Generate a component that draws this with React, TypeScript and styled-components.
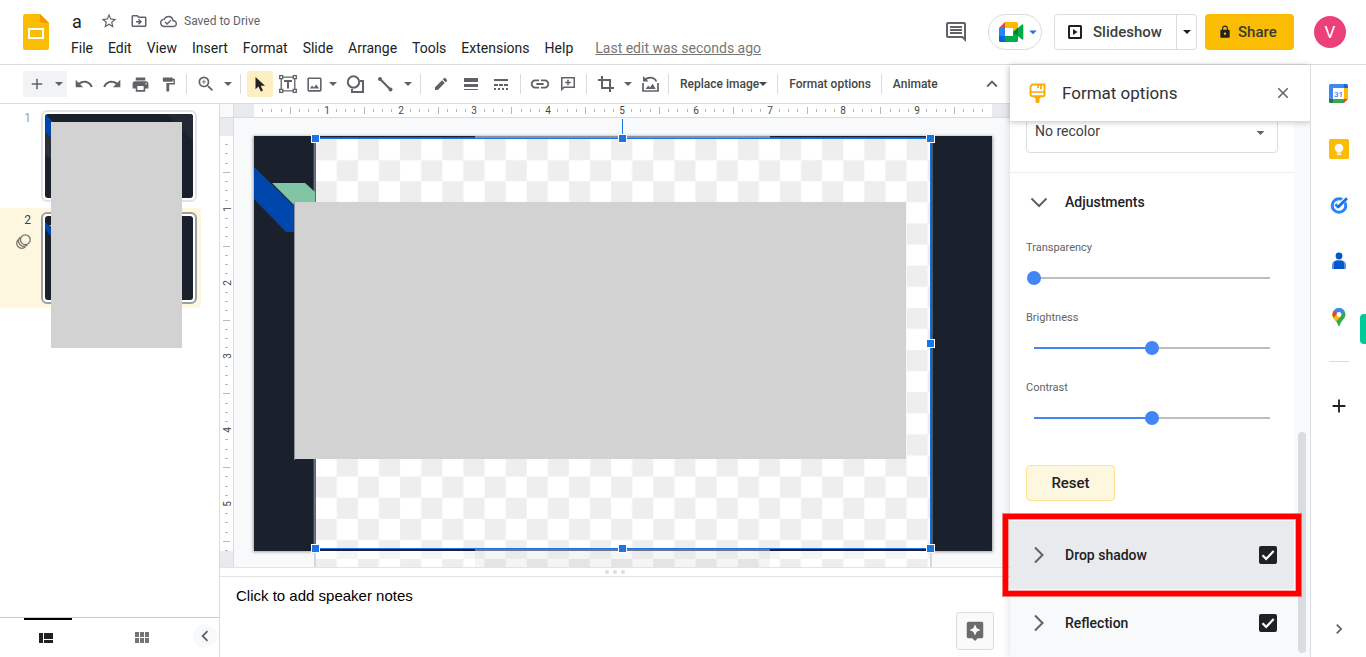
import React from "react";
import styled, { createGlobalStyle, css } from "styled-components";
import {
  MdAdd,
  MdArrowDropDown,
  MdAssistant,
  MdChevronLeft,
  MdChevronRight,
  MdClose,
  MdFormatPaint,
  MdInsertLink,
  MdKeyboardArrowUp,
  MdLock,
  MdOutlineCloudDone,
  MdOutlineDriveFileMove,
  MdOutlineImage,
  MdOutlineInsertComment,
  MdPrint,
  MdRedo,
  MdStarBorder,
  MdUndo,
  MdZoomIn,
} from "react-icons/md";

const c = {
  text: "#202124",
  icon: "#5f6368",
  line: "#dadce0",
  surface: "#f8f9fa",
  inactive: "#e8eaed",
  blue: "#1a73e8",
  slider: "#4285f4",
  yellow: "#fbbc04",
  ink: "#1b212c",
};

const GlobalStyle = createGlobalStyle`
  *, *::before, *::after { box-sizing: border-box; }
  body { margin: 0; background: #fff; color: ${c.text}; font-family: Roboto, "Liberation Sans", sans-serif; font-size: 14px; }
  button { font: inherit; color: inherit; border: 0; padding: 0; background: none; cursor: pointer; }
  svg { display: block; flex: none; }
  h1, h2, ol { margin: 0; padding: 0; font: inherit; }
`;

/* Page frame */

const Page = styled.div`
  display: flex;
  flex-direction: column;
  height: 100vh;
  overflow: hidden;
`;

const Body = styled.div`
  display: flex;
  flex: 1;
  min-height: 0;
`;

const Main = styled.main`
  display: flex;
  flex-direction: column;
  flex: 1;
  min-width: 0;
`;

const Workspace = styled.div`
  display: flex;
  flex: 1;
  min-height: 0;
`;

/* Header */

const Header = styled.header`
  display: flex;
  align-items: flex-start;
  height: 65px;
  padding: 0 20px 0 23px;
  border-bottom: 1px solid ${c.line};
`;

const LogoLink = styled.a`
  margin-top: 14px;
`;

const TitleBlock = styled.div`
  display: flex;
  flex-direction: column;
  flex: 1;
  margin-left: 15px;
  padding-top: 10px;
`;

const TitleRow = styled.div`
  display: flex;
  align-items: center;
  height: 22px;
  padding-left: 8px;
  color: ${c.icon};
`;

const DocTitle = styled.h1`
  width: 28px;
  font-size: 18px;
  color: ${c.text};
`;

const TitleButton = styled.button`
  width: 30px;
`;

const SaveState = styled.span`
  display: flex;
  align-items: center;
  gap: 7px;
  font-size: 12px;
`;

const MenuBar = styled.nav`
  display: flex;
  align-items: center;
  gap: 1px;
  height: 32px;
`;

const MenuButton = styled.button`
  padding: 0 7px;
  font-size: 14px;
  line-height: 20px;
  white-space: nowrap;
`;

const LastEdit = styled.a`
  margin-left: 14px;
  color: #777;
  font-size: 14px;
  line-height: 20px;
  white-space: nowrap;
`;

const HeaderActions = styled.div`
  display: flex;
  align-items: center;
  height: 64px;
`;

const CommentButton = styled.button`
  margin-right: 20px;
  color: ${c.icon};
`;

const MeetButton = styled.button`
  display: flex;
  align-items: center;
  width: 54px;
  height: 36px;
  margin-right: 12px;
  padding-left: 10px;
  border: 1px solid ${c.line};
  border-radius: 18px;
  color: ${c.blue};
`;

const SplitButton = styled.div`
  display: flex;
  height: 36px;
  margin-right: 8px;
  border: 1px solid ${c.line};
  border-radius: 4px;
`;

const SlideshowButton = styled.button`
  display: flex;
  align-items: center;
  gap: 11px;
  width: 121px;
  padding-left: 13px;
  font-size: 15px;
  font-weight: 500;
  color: #3c4043;
  svg { color: ${c.text}; }
`;

const SplitArrow = styled.button`
  display: flex;
  align-items: center;
  justify-content: center;
  width: 20px;
  border-left: 1px solid ${c.line};
`;

const ShareButton = styled.button`
  display: flex;
  align-items: center;
  gap: 6px;
  width: 89px;
  height: 36px;
  margin-right: 20px;
  padding-left: 13px;
  border-radius: 4px;
  background: ${c.yellow};
  font-size: 15px;
  font-weight: 500;
  color: #3c3a2e;
  svg { color: ${c.text}; }
`;

const Avatar = styled.button`
  width: 32px;
  height: 32px;
  border-radius: 50%;
  background: #ec407a;
  color: #fff;
  font-size: 17px;
`;

/* Toolbar */

const Toolbar = styled.div`
  display: flex;
  align-items: center;
  flex: none;
  height: 39px;
  padding: 0 7px 0 23px;
  border-bottom: 1px solid ${c.line};
  color: ${c.icon};
`;

const ToolButton = styled.button<{ $w?: number; $active?: boolean }>`
  display: flex;
  align-items: center;
  justify-content: center;
  width: ${(p) => p.$w ?? 28}px;
  height: 26px;
  border-radius: 2px;
  ${(p) =>
    p.$active &&
    css`
      width: 26px;
      margin: 0 1px;
      background: #feefc3;
      color: ${c.text};
    `}
`;

const NewSlide = styled.div`
  display: flex;
  margin-right: 3px;
  border-radius: 2px;
  background: #f1f3f4;
`;

const ToolText = styled.button`
  display: flex;
  align-items: center;
  height: 26px;
  padding: 0 6px;
  font-size: 12px;
  font-weight: 500;
  color: #444746;
  white-space: nowrap;
`;

const ToolDivider = styled.span`
  width: 1px;
  height: 20px;
  margin: 0 5px 0 4px;
  background: ${c.line};
`;

const ToolSpacer = styled.span`
  flex: 1;
`;

/* Filmstrip */

const Filmstrip = styled.aside`
  position: relative;
  display: flex;
  flex-direction: column;
  flex: none;
  width: 220px;
  border-right: 1px solid ${c.line};
`;

const SlideList = styled.ol`
  display: flex;
  flex-direction: column;
  flex: 1;
  gap: 2px;
  padding-top: 2px;
  list-style: none;
`;

const SlideItem = styled.li<{ $active?: boolean }>`
  display: flex;
  justify-content: space-between;
  width: 201px;
  height: 100px;
  padding: 4px;
  border-radius: 0 4px 4px 0;
  background: ${(p) => (p.$active ? "#fef7e0" : "transparent")};
  color: ${(p) => (p.$active ? "#3c4043" : "#9aa0a6")};
`;

const SlideMeta = styled.div`
  display: flex;
  flex-direction: column;
  align-items: flex-end;
  gap: 6px;
  width: 27px;
  font-size: 12px;
  line-height: 16px;
`;

const Thumb = styled.button<{ $active?: boolean }>`
  width: 156px;
  height: 92px;
  padding: 2px;
  border: 2px solid ${(p) => (p.$active ? "#9aa0a6" : "#e1e3e8")};
  border-radius: 6px;
  background: #fff;
  svg { border-radius: 3px; }
`;

const Redaction = styled.div`
  position: absolute;
  top: 18px;
  left: 51px;
  width: 131px;
  height: 226px;
  background: #d2d2d2;
`;

const ViewBar = styled.div`
  display: flex;
  flex: none;
  height: 40px;
  border-top: 1px solid #ccc;
  padding-left: 24px;
`;

const ViewButton = styled.button<{ $active?: boolean }>`
  display: flex;
  align-items: center;
  justify-content: center;
  width: 48px;
  margin-right: 48px;
  padding: 0 4px 2px 0;
  border-top: 2px solid ${(p) => (p.$active ? "#000" : "transparent")};
  color: ${(p) => (p.$active ? c.text : "#757575")};
`;

const CollapseButton = styled.button`
  display: flex;
  align-items: center;
  justify-content: center;
  width: 24px;
  height: 24px;
  margin: 6px 0 0 -23px;
  border-radius: 50%;
  background: ${c.surface};
  color: ${c.icon};
`;

/* Editor */

const Editor = styled.section`
  display: flex;
  flex-direction: column;
  flex: 1;
  min-width: 0;
`;

const RulerRow = styled.div`
  display: flex;
  flex: none;
  height: 14px;
  border-bottom: 1px solid ${c.line};
`;

const RulerCorner = styled.div`
  width: 14px;
  border-right: 1px solid ${c.line};
  background: ${c.surface};
`;

const RulerMargin = styled.div<{ $size?: number }>`
  flex: ${(p) => (p.$size ? `0 0 ${p.$size}px` : "1")};
  background: ${c.inactive};
`;

const TopTrack = styled.svg`
  flex: 1;
  min-width: 0;
  height: 13px;
`;

const SideTrack = styled.svg`
  width: 13px;
  height: 415px;
`;

const Stage = styled.div`
  display: flex;
  flex: 1;
  min-height: 0;
  overflow: hidden;
`;

const SideRuler = styled.div`
  display: flex;
  flex-direction: column;
  flex: none;
  width: 14px;
  border-right: 1px solid ${c.line};
`;

const Canvas = styled.div`
  flex: 1;
  min-width: 0;
  padding: 18px 18px 0 20px;
  background: ${c.surface};
`;

const SlideArt = styled.svg`
  width: 100%;
  overflow: visible;
`;

const Splitter = styled.div`
  display: flex;
  align-items: center;
  justify-content: center;
  gap: 4px;
  flex: none;
  height: 10px;
  border: solid #e3e3e3;
  border-width: 1px 0;
  i { width: 4px; height: 4px; border-radius: 50%; background: ${c.line}; }
`;

const Notes = styled.div`
  display: flex;
  justify-content: space-between;
  flex: none;
  height: 80px;
  padding: 0 16px;
  p { margin: 0; padding-top: 9px; font-family: "Liberation Sans", Arial, sans-serif; font-size: 15px; line-height: 20px; color: #000; }
`;

const ExploreButton = styled.button`
  display: flex;
  align-items: center;
  justify-content: center;
  width: 38px;
  height: 38px;
  margin-top: 35px;
  border: 1px solid ${c.line};
  border-radius: 3px;
  background: #fafafa;
  color: #6b6b6b;
`;

/* Format options */

const Panel = styled.aside`
  position: relative;
  display: flex;
  flex-direction: column;
  flex: none;
  width: 300px;
  background: ${c.surface};
  box-shadow: -2px 0 6px rgba(60, 64, 67, 0.12);
`;

const PanelHeader = styled.div`
  position: relative;
  z-index: 1;
  display: flex;
  align-items: center;
  flex: none;
  height: 57px;
  padding: 0 18px;
  background: #fff;
  border-bottom: 1px solid ${c.line};
  box-shadow: 0 1px 5px rgba(60, 64, 67, 0.25);
`;

const PanelTitle = styled.h2`
  flex: 1;
  margin-left: 14px;
  padding-bottom: 1px;
  font-size: 17px;
  color: #303236;
`;

const IconButton = styled.button`
  color: ${c.icon};
`;

const PanelScroll = styled.div`
  flex: 1;
  margin-top: -13px;
  padding-right: 16px;
`;

const Section = styled.section`
  padding: 0 16px 19px;
  background: #fff;
  & + & {
    padding-bottom: 20px;
    border-top: 1px solid #eceef0;
    border-radius: 0 0 6px 6px;
  }
`;

const SelectBox = styled.div`
  position: relative;
  svg { position: absolute; right: 8px; top: 14px; color: ${c.icon}; pointer-events: none; }
`;

const Select = styled.select`
  width: 100%;
  height: 44px;
  padding: 0 8px;
  border: 1px solid ${c.line};
  border-radius: 4px;
  background: #fff;
  appearance: none;
  font: 14px Roboto, sans-serif;
  color: #3c4043;
`;

const SectionToggle = styled.button`
  display: flex;
  align-items: center;
  gap: 16px;
  font-size: 14px;
  font-weight: 500;
  color: ${c.text};
  svg { color: ${c.icon}; }
`;

const AdjustToggle = styled(SectionToggle)`
  height: 58px;
  margin: 0 0 7px 3px;
`;

const Field = styled.label`
  display: flex;
  flex-direction: column;
  height: 70px;
  font-size: 11px;
  line-height: 20px;
  color: ${c.icon};
`;

const Slider = styled.input<{ $fill: number }>`
  width: 250px;
  height: 16px;
  margin: 12px 0 0 1px;
  appearance: none;
  background: linear-gradient(to right, ${c.slider} ${(p) => p.$fill}%, #bdbdbd ${(p) => p.$fill}%) center / calc(100% - 14px) 2px no-repeat;
  &::-webkit-slider-thumb { appearance: none; width: 14px; height: 14px; border-radius: 50%; background: ${c.slider}; }
`;

const ResetButton = styled.button`
  display: block;
  width: 89px;
  height: 36px;
  margin-top: 17px;
  border: 1px solid #fde293;
  border-radius: 4px;
  background: #fef7e0;
  font-size: 15px;
  font-weight: 500;
`;

const EffectRow = styled.div<{ $hover?: boolean }>`
  position: relative;
  display: flex;
  align-items: center;
  justify-content: space-between;
  height: 68px;
  padding: 0 17px 0 19px;
  background: ${(p) => (p.$hover ? c.inactive : "transparent")};
`;

const CheckBox = styled.input`
  appearance: none;
  width: 18px;
  height: 18px;
  margin: 0;
  border-radius: 2px;
  background: ${c.text} url("data:image/svg+xml,%3Csvg xmlns='http://www.w3.org/2000/svg' viewBox='0 0 18 18'%3E%3Cpath d='M3.5 9.3l3.6 3.6 7.6-7.8' fill='none' stroke='white' stroke-width='2.2'/%3E%3C/svg%3E") center / 18px;
`;

const Highlight = styled.div`
  position: absolute;
  z-index: 2;
  inset: -7px;
  border: 5px solid #f00;
  box-shadow: 0 0 0 1px rgba(255, 0, 0, 0.5), inset 0 0 0 1px rgba(255, 0, 0, 0.35);
  pointer-events: none;
`;

const ScrollThumb = styled.div`
  position: absolute;
  right: 4px;
  bottom: 4px;
  width: 8px;
  height: 221px;
  border-radius: 4px;
  background: ${c.line};
`;

/* App rail */

const Rail = styled.nav`
  position: relative;
  z-index: 1;
  display: flex;
  flex-direction: column;
  align-items: center;
  flex: none;
  width: 56px;
  padding-bottom: 18px;
  border-left: 1px solid ${c.line};
  background: #fff;
  hr { width: 20px; height: 1px; margin: 16px 0; border: 0; background: ${c.line}; }
`;

const RailLink = styled.a`
  display: flex;
  align-items: center;
  justify-content: center;
  width: 56px;
  height: 56px;
  color: ${c.text};
`;

const RailSpacer = styled.span`
  flex: 1;
`;

const RailTab = styled.div`
  position: absolute;
  top: 249px;
  right: 0;
  width: 6px;
  height: 30px;
  border-radius: 4px 0 0 4px;
  background: #00cb98;
`;

/* Icons */

const Caret = () => (
  <svg width="8" height="4" viewBox="0 0 8 4" fill="currentColor" aria-hidden>
    <path d="M0 0h8L4 4z" />
  </svg>
);

const SlidesLogo = () => (
  <svg width="26" height="36" viewBox="0 0 26 36">
    <path d="M2.500 0H17l9 9v24.500a2.500 2.500 0 0 1-2.500 2.500h-21A2.500 2.500 0 0 1 0 33.500v-31A2.500 2.500 0 0 1 2.500 0z" fill="#fbbc04" />
    <path d="M17 0l9 9h-6.500A2.500 2.500 0 0 1 17 6.500z" fill="#f29900" />
    <path d="M6 15h14v9H6z" fill="none" stroke="#fff" strokeWidth="2" />
  </svg>
);

const MeetLogo = () => (
  <svg width="25" height="20" viewBox="0 0 25 20">
    <path d="M0 6l6-6v6z" fill="#ea4335" />
    <path d="M0 6h6v8H0z" fill="#2684fc" />
    <path d="M0 14h6v6H1.500A1.500 1.500 0 0 1 0 18.500z" fill="#0066da" />
    <path d="M6 0h11.500A1.500 1.500 0 0 1 19 1.500V8l-5 3V6H6z" fill="#ffba00" />
    <path d="M6 14h8v-4l5 2v6.500a1.500 1.500 0 0 1-1.500 1.500H6z" fill="#00ac47" />
    <path d="M14 10l9-7.500a.800.800 0 0 1 1.300.600v13.800a.800.800 0 0 1-1.300.600z" fill="#00ac47" />
    <path d="M14 10l5-4.200v8.400z" fill="#00832d" />
  </svg>
);

const SlideshowIcon = () => (
  <svg width="14" height="14" viewBox="0 0 14 14">
    <rect x="1" y="1" width="12" height="12" rx=".5" fill="none" stroke="currentColor" strokeWidth="2" />
    <path d="M5 4l4.500 3L5 10z" fill="currentColor" />
  </svg>
);

const CursorIcon = () => (
  <svg width="12" height="16" viewBox="0 0 12 16" fill="currentColor">
    <path d="M1.500 1v12.300l3-2.700 2.300 5 2.200-1-2.300-4.800h4.300z" />
  </svg>
);

const TextBoxIcon = () => (
  <svg width="18" height="18" viewBox="0 0 18 18" fill="none" stroke="currentColor" strokeWidth="1.300">
    <path d="M4 2.200h10M4 15.800h10M2.200 4v10M15.800 4v10" />
    <path d="M.700.700h3v3h-3zM14.300.700h3v3h-3zM.700 14.300h3v3h-3zM14.300 14.300h3v3h-3z" />
    <path d="M5 6h8M9 6v7.500" strokeWidth="2" />
  </svg>
);

const ShapeIcon = () => (
  <svg width="18" height="18" viewBox="0 0 18 18" fill="none" stroke="currentColor" strokeWidth="2">
    <circle cx="7.500" cy="7" r="5.700" />
    <path d="M14 6h3v11H6v-3" />
  </svg>
);

const LineIcon = () => (
  <svg width="16" height="16" viewBox="0 0 16 16" fill="currentColor">
    <path d="M2.500 2.500l11 11" stroke="currentColor" strokeWidth="2.200" />
    <circle cx="3" cy="3" r="2" />
    <circle cx="13.500" cy="13.500" r="2" />
  </svg>
);

const PencilIcon = () => (
  <svg width="14" height="14" viewBox="0 0 14 14" fill="currentColor">
    <path d="M1 10.200V13h2.800l7-7L8 3.200zM8.800 2.400l2.800 2.800 1.300-1.300a.8.8 0 0 0 0-1.100L11.200 1.100a.8.8 0 0 0-1.100 0z" />
  </svg>
);

const WeightIcon = () => (
  <svg width="14" height="12" viewBox="0 0 14 12" fill="currentColor">
    <path d="M0 0h14v4H0zM0 6h14v3H0zM0 11h14v1H0z" />
  </svg>
);

const DashIcon = () => (
  <svg width="14" height="11" viewBox="0 0 14 11" fill="currentColor">
    <path d="M0 0h14v2H0zM0 5h4v2H0zM5 5h4v2H5zM10 5h4v2h-4zM0 9h2v2H0zM4 9h2v2H4zM8 9h2v2H8zM12 9h2v2h-2z" />
  </svg>
);

const AddCommentIcon = () => (
  <svg width="14" height="14" viewBox="0 0 14 14" fill="none" stroke="currentColor">
    <path d="M.750 12.500V.750h12.500v9.500H3z" strokeWidth="1.500" />
    <path d="M7 2.700v5.600M4.200 5.500h5.600" strokeWidth="1.500" />
  </svg>
);

const CropIcon = () => (
  <svg width="16" height="16" viewBox="0 0 16 16" fill="none" stroke="currentColor" strokeWidth="2">
    <path d="M0 4h12v12M4 0v12h12" />
  </svg>
);

const ResetImageIcon = () => (
  <svg width="17" height="16" viewBox="0 0 17 16" fill="none" stroke="currentColor" strokeWidth="1.700">
    <path d="M1 7v8h15V7" />
    <path d="M2.500 4.500C5 .800 12 .200 14.500 5.500" />
    <path d="M1 0v5.500h5.500z" fill="currentColor" stroke="none" />
    <path d="M3.500 13l2.700-3.500 1.800 2 2.700-3.700 3 5.200z" fill="currentColor" stroke="none" />
  </svg>
);

const BrushIcon = () => (
  <svg width="20" height="20" viewBox="0 0 20 20">
    <path d="M6 1.500h10.500v10a1.700 1.700 0 0 1-1.700 1.700H4.200a1.700 1.700 0 0 1-1.700-1.700v-7a3 3 0 0 1 3-3z" fill="#fff" stroke="#f9ab00" strokeWidth="1.900" />
    <path d="M2.500 9h14M13 1.500v5M10 1.500v3.500" fill="none" stroke="#f9ab00" strokeWidth="1.700" />
    <path d="M6.500 13h6v2h-1v3.500A1.500 1.500 0 0 1 10 20H9a1.500 1.500 0 0 1-1.500-1.500V15h-1z" fill="#f9ab00" />
  </svg>
);

const MotionIcon = () => (
  <svg width="16" height="16" viewBox="0 0 16 16" fill="none" stroke="#75736a" strokeWidth="1.300">
    <circle cx="10.300" cy="5.700" r="4.900" />
    <path d="M5 3.300a4.900 4.900 0 1 0 7.500 7.500" />
    <path d="M3.200 5.600a4.900 4.900 0 1 0 7.200 7.200" />
  </svg>
);

const FilmstripIcon = () => (
  <svg width="14" height="10" viewBox="0 0 14 10" fill="currentColor">
    <path d="M0 0h4v10H0zM5 0h9v6H5zM5 7h9v3H5z" />
  </svg>
);

const GridIcon = () => (
  <svg width="14" height="11" viewBox="0 0 14 11" fill="currentColor">
    <path d="M0 0h4v5H0zM5 0h4v5H5zM10 0h4v5h-4zM0 6h4v5H0zM5 6h4v5H5zM10 6h4v5h-4z" />
  </svg>
);

const Chevron = ({ down }: { down?: boolean }) => (
  <svg width="20" height="18" viewBox="0 0 20 18" fill="none" stroke="currentColor" strokeWidth="2">
    <path d={down ? "M2.500 5.500l7.500 7.500 7.500-7.500" : "M6 1.500l7.500 7.500L6 16.500"} />
  </svg>
);

const CalendarIcon = () => (
  <svg width="19" height="19" viewBox="0 0 19 19">
    <path d="M1.500 0H15v4H4v11H0V1.500A1.500 1.500 0 0 1 1.500 0z" fill="#4285f4" />
    <path d="M15 0h2.500A1.500 1.500 0 0 1 19 1.500V4h-4z" fill="#1967d2" />
    <path d="M15 4h4v11h-4z" fill="#fbbc04" />
    <path d="M4 15h11v4H4z" fill="#34a853" />
    <path d="M0 15h4v4H1.500A1.500 1.500 0 0 1 0 17.500z" fill="#188038" />
    <path d="M15 15h4l-4 4z" fill="#ea4335" />
    <path d="M4 4h11v11H4z" fill="#fff" />
    <text x="9.500" y="12.500" textAnchor="middle" fontFamily="Roboto" fontSize="8" fontWeight="500" fill="#4285f4">31</text>
  </svg>
);

const KeepIcon = () => (
  <svg width="20" height="20" viewBox="0 0 20 20">
    <rect width="20" height="20" rx="2" fill="#fbbc04" />
    <circle cx="10" cy="9" r="4.300" fill="#fff" />
    <path d="M7.800 11.500h4.400v2H7.800zM7.800 14.500h4.400V16H7.800z" fill="#fff" />
  </svg>
);

const TasksIcon = () => (
  <svg width="18" height="18" viewBox="0 0 18 18" fill="none">
    <circle cx="9" cy="9.500" r="6.800" stroke="#2684fc" strokeWidth="3" />
    <path d="M10 8.500L16.500 2" stroke="#fff" strokeWidth="4.500" />
    <path d="M5.300 8.200l3.300 3.300" stroke="#2684fc" strokeWidth="2.800" />
    <path d="M7.700 11.500L17 2.200" stroke="#1a6fe0" strokeWidth="2.800" />
  </svg>
);

const ContactsIcon = () => (
  <svg width="16" height="18" viewBox="0 0 16 18">
    <circle cx="8" cy="4" r="3.400" fill="#0057cc" />
    <path d="M1 17v-4a4.500 4.500 0 0 1 4.500-4.500h5A4.500 4.500 0 0 1 15 13v4z" fill="#5c8df6" />
    <path d="M3 17v-5a3.500 3.500 0 0 1 3.500-3.500h3A3.500 3.500 0 0 1 13 12v5z" fill="#0057cc" />
  </svg>
);

const MapsIcon = () => (
  <svg width="14" height="18" viewBox="0 0 14 18">
    <path d="M7 0a6.500 6.500 0 0 1 6.500 6.500c0 4.500-4.300 5.500-5.500 10.500a1 1 0 0 1-2 0C4.800 12 .500 11 .500 6.500A6.500 6.500 0 0 1 7 0z" fill="#34a853" />
    <path d="M1.800 10.500C1 9.300.500 8 .500 6.500c0-1.500.500-3 1.500-4.100L9 8.300 4.200 13.500z" fill="#fbbc04" />
    <path d="M2 2.400C1 3.500.500 5 .500 6.500c0 1.300.300 2.200.800 3L6 5.800z" fill="#ea4335" />
    <path d="M2 2.400a6.500 6.500 0 0 1 10.500.700L8 8 4.500 4.500z" fill="#4285f4" />
    <circle cx="7" cy="6.500" r="2.400" fill="#fff" />
  </svg>
);

/* Rulers: the slide is 10 x 5.625 inches, 73.8 units to the inch */

const INCH = 73.8;

function Ruler({ vertical }: { vertical?: boolean }) {
  const marks = Array.from({ length: vertical ? 45 : 79 }, (_, i) => i + 1).map((i) => {
    const at = Math.round((i * INCH) / 8) - 1;
    if (i % 8 === 0) {
      return (
        <text
          key={i}
          transform={vertical ? `translate(11 ${at}) rotate(-90)` : `translate(${at} 10)`}
          textAnchor="middle"
          fontFamily="Roboto"
          fontSize="10"
          fill="#444746"
        >
          {i / 8}
        </text>
      );
    }
    const half = i % 4 === 0;
    const from = half ? 3 : 5;
    const size = half ? 7 : 3;
    return vertical
      ? <rect key={i} x={from} y={at} width={size} height="1" fill="#b7b9bc" />
      : <rect key={i} x={at} y={from} width="1" height={size} fill="#b7b9bc" />;
  });
  return vertical
    ? <SideTrack viewBox="0 0 13 415">{marks}</SideTrack>
    : <TopTrack viewBox="0 0 738 13">{marks}</TopTrack>;
}

const HANDLES = [
  [61.5, 2.5], [368.5, 2.5], [676.5, 2.5], [676.5, 207.5],
  [61.5, 412.5], [368.5, 412.5], [676.5, 412.5],
];

const SlideCanvas = () => (
  <SlideArt viewBox="0 0 738 415" role="img" aria-label="Slide 2">
    <defs>
      <pattern id="check" x="61.700" y="3" width="42.200" height="42.200" patternUnits="userSpaceOnUse">
        <rect width="43" height="43" fill="#fff" />
        <rect width="21.100" height="21.100" fill="#eee" />
        <rect x="21.100" y="21.100" width="21.100" height="21.100" fill="#eee" />
      </pattern>
      <filter id="soft" x="-5%" y="-5%" width="110%" height="110%">
        <feGaussianBlur stdDeviation="1.500" />
      </filter>
    </defs>
    <rect x="-1" y="0" width="740" height="416" fill="#000" opacity=".35" filter="url(#soft)" />
    <rect width="738" height="415" fill={c.ink} />
    <rect x="59" y="3" width="1" height="410" fill="#3c4350" />
    <rect x="60" y="3" width="1" height="410" fill="#6a7386" />
    <path d="M18 47h33l10 9v13H40z" fill="#82c5a5" />
    <path d="M0 31l40 39v26h-8L0 63z" fill="#0047ad" />
    <rect x="62" y="1" width="614" height="1" fill="#4a5365" />
    <rect x="221" width="295" height="2" fill="#8d9097" />
    <rect x="677" y="3" width="2" height="410" fill="#4d5665" />
    <rect x="62" y="3" width="614" height="410" fill="url(#check)" />
    <rect x="221" y="413" width="295" height="2" fill="#6c7686" />
    <g transform="translate(0 420)">
      <rect x="62" y="-5" width="614" height="30" fill="url(#check)" />
      <rect x="62" y="-5" width="614" height="8" fill="#fff" opacity=".4" />
      <rect x="221" y="-5" width="295" height="30" fill="#000" opacity=".04" />
    </g>
    <path d="M61 415v30M677 415v30" stroke="#d5d7da" strokeWidth="2" />
    <rect x="61.500" y="2.500" width="615" height="410" fill="none" stroke={c.blue} />
    <path d="M368.500-17V0" stroke={c.blue} />
    <rect x="40" y="66" width="1" height="258" fill="#8f949c" />
    <rect x="41" y="66" width="611" height="257" fill="#d2d2d2" />
    {HANDLES.map(([x, y]) => (
      <rect key={`${x}-${y}`} x={x - 4} y={y - 4} width="8" height="8" fill={c.blue} stroke="#fff" />
    ))}
  </SlideArt>
);

const MENUS = ["File", "Edit", "View", "Insert", "Format", "Slide", "Arrange", "Tools", "Extensions", "Help"];

const ADJUSTMENTS = [
  { name: "Transparency", value: 0 },
  { name: "Brightness", value: 50 },
  { name: "Contrast", value: 50 },
];

export default function App() {
  return (
    <Page>
      <GlobalStyle />
      <Header>
        <LogoLink href="#" aria-label="Slides home"><SlidesLogo /></LogoLink>
        <TitleBlock>
          <TitleRow>
            <DocTitle>a</DocTitle>
            <TitleButton aria-label="Star"><MdStarBorder size={18} /></TitleButton>
            <TitleButton aria-label="Move"><MdOutlineDriveFileMove size={18} /></TitleButton>
            <SaveState><MdOutlineCloudDone size={17} />Saved to Drive</SaveState>
          </TitleRow>
          <MenuBar>
            {MENUS.map((m) => <MenuButton key={m}>{m}</MenuButton>)}
            <LastEdit href="#">Last edit was seconds ago</LastEdit>
          </MenuBar>
        </TitleBlock>
        <HeaderActions>
          <CommentButton aria-label="Open comment history"><MdOutlineInsertComment size={24} /></CommentButton>
          <MeetButton aria-label="Join a call"><MeetLogo /><MdArrowDropDown size={18} /></MeetButton>
          <SplitButton>
            <SlideshowButton><SlideshowIcon />Slideshow</SlideshowButton>
            <SplitArrow aria-label="Slideshow options"><Caret /></SplitArrow>
          </SplitButton>
          <ShareButton><MdLock size={14} />Share</ShareButton>
          <Avatar aria-label="Account">V</Avatar>
        </HeaderActions>
      </Header>

      <Body>
        <Main>
          <Toolbar role="toolbar">
            <NewSlide>
              <ToolButton aria-label="New slide"><MdAdd size={18} /></ToolButton>
              <ToolButton $w={16} aria-label="Slide layouts"><Caret /></ToolButton>
            </NewSlide>
            <ToolButton aria-label="Undo"><MdUndo size={20} /></ToolButton>
            <ToolButton aria-label="Redo"><MdRedo size={20} /></ToolButton>
            <ToolButton aria-label="Print"><MdPrint size={19} /></ToolButton>
            <ToolButton aria-label="Paint format"><MdFormatPaint size={17} /></ToolButton>
            <ToolDivider />
            <ToolButton aria-label="Zoom in"><MdZoomIn size={20} /></ToolButton>
            <ToolButton $w={16} aria-label="Zoom levels"><Caret /></ToolButton>
            <ToolDivider />
            <ToolButton $active aria-label="Select"><CursorIcon /></ToolButton>
            <ToolButton aria-label="Text box"><TextBoxIcon /></ToolButton>
            <ToolButton $w={24} aria-label="Insert image"><MdOutlineImage size={19} /></ToolButton>
            <ToolButton $w={14} aria-label="Image sources"><Caret /></ToolButton>
            <ToolButton $w={30} aria-label="Shape"><ShapeIcon /></ToolButton>
            <ToolButton $w={30} aria-label="Line"><LineIcon /></ToolButton>
            <ToolButton $w={16} aria-label="Line types"><Caret /></ToolButton>
            <ToolDivider />
            <ToolButton $w={30} aria-label="Border colour"><PencilIcon /></ToolButton>
            <ToolButton $w={30} aria-label="Border weight"><WeightIcon /></ToolButton>
            <ToolButton $w={30} aria-label="Border dash"><DashIcon /></ToolButton>
            <ToolDivider />
            <ToolButton aria-label="Insert link"><MdInsertLink size={22} /></ToolButton>
            <ToolButton aria-label="Add comment"><AddCommentIcon /></ToolButton>
            <ToolDivider />
            <ToolButton aria-label="Crop image"><CropIcon /></ToolButton>
            <ToolButton $w={16} aria-label="Mask image"><Caret /></ToolButton>
            <ToolButton aria-label="Reset image"><ResetImageIcon /></ToolButton>
            <ToolDivider />
            <ToolText>Replace image<Caret /></ToolText>
            <ToolDivider />
            <ToolText>Format options</ToolText>
            <ToolDivider />
            <ToolText>Animate</ToolText>
            <ToolSpacer />
            <ToolButton $w={22} aria-label="Hide the menus"><MdKeyboardArrowUp size={22} /></ToolButton>
          </Toolbar>

          <Workspace>
            <Filmstrip>
              <SlideList>
                <SlideItem>
                  <SlideMeta>1</SlideMeta>
                  <Thumb aria-label="Slide 1">
                    <svg width="148" height="84" viewBox="0 0 148 84">
                      <path d="M0 0h148v84H0z" fill={c.ink} />
                      <path d="M122 0h26v26z" fill="#232934" />
                      <path d="M0 18l20 20v20L0 40z" fill="#2b2f37" />
                      <path d="M0 0l16 16v18L0 18z" fill="#0047ad" />
                    </svg>
                  </Thumb>
                </SlideItem>
                <SlideItem $active>
                  <SlideMeta>2<MotionIcon /></SlideMeta>
                  <Thumb $active aria-label="Slide 2">
                    <svg width="148" height="84" viewBox="0 0 148 84">
                      <path d="M0 0h148v84H0z" fill={c.ink} />
                      <path d="M4 9h8v8z" fill="#82c5a5" />
                      <path d="M0 6l10 10v9L0 13z" fill="#0047ad" />
                    </svg>
                  </Thumb>
                </SlideItem>
              </SlideList>
              <Redaction />
              <ViewBar>
                <ViewButton $active aria-label="Filmstrip view"><FilmstripIcon /></ViewButton>
                <ViewButton aria-label="Grid view"><GridIcon /></ViewButton>
                <CollapseButton aria-label="Hide filmstrip"><MdChevronLeft size={22} /></CollapseButton>
              </ViewBar>
            </Filmstrip>

            <Editor>
              <RulerRow>
                <RulerCorner />
                <RulerMargin $size={20} />
                <Ruler />
                <RulerMargin $size={18} />
              </RulerRow>
              <Stage>
                <SideRuler>
                  <RulerMargin $size={18} />
                  <Ruler vertical />
                  <RulerMargin />
                </SideRuler>
                <Canvas><SlideCanvas /></Canvas>
              </Stage>
              <Splitter><i /><i /><i /></Splitter>
              <Notes>
                <p>Click to add speaker notes</p>
                <ExploreButton aria-label="Explore"><MdAssistant size={22} /></ExploreButton>
              </Notes>
            </Editor>
          </Workspace>
        </Main>

        <Panel>
          <PanelHeader>
            <BrushIcon />
            <PanelTitle>Format options</PanelTitle>
            <IconButton aria-label="Close"><MdClose size={18} /></IconButton>
          </PanelHeader>
          <PanelScroll>
            <Section>
              <SelectBox>
                <Select aria-label="Recolor"><option>No recolor</option></Select>
                <MdArrowDropDown size={19} />
              </SelectBox>
            </Section>
            <Section>
              <AdjustToggle><Chevron down />Adjustments</AdjustToggle>
              {ADJUSTMENTS.map((a) => (
                <Field key={a.name}>
                  {a.name}
                  <Slider type="range" defaultValue={a.value} $fill={a.value} />
                </Field>
              ))}
              <ResetButton>Reset</ResetButton>
            </Section>
            <EffectRow $hover>
              <SectionToggle><Chevron />Drop shadow</SectionToggle>
              <CheckBox type="checkbox" defaultChecked aria-label="Drop shadow" />
              <Highlight />
            </EffectRow>
            <EffectRow>
              <SectionToggle><Chevron />Reflection</SectionToggle>
              <CheckBox type="checkbox" defaultChecked aria-label="Reflection" />
            </EffectRow>
          </PanelScroll>
          <ScrollThumb />
        </Panel>

        <Rail>
          <RailLink href="#" aria-label="Calendar"><CalendarIcon /></RailLink>
          <RailLink href="#" aria-label="Keep"><KeepIcon /></RailLink>
          <RailLink href="#" aria-label="Tasks"><TasksIcon /></RailLink>
          <RailLink href="#" aria-label="Contacts"><ContactsIcon /></RailLink>
          <RailLink href="#" aria-label="Maps"><MapsIcon /></RailLink>
          <hr />
          <RailLink href="#" aria-label="Get add-ons"><MdAdd size={22} /></RailLink>
          <RailSpacer />
          <IconButton aria-label="Hide side panel"><MdChevronRight size={20} /></IconButton>
          <RailTab />
        </Rail>
      </Body>
    </Page>
  );
}
